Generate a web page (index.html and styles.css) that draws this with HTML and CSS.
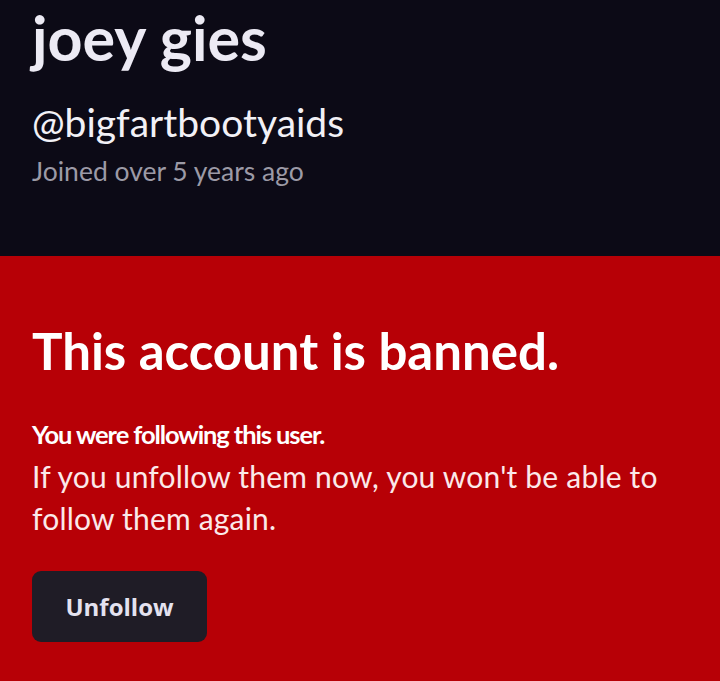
FILE: index.html
```html
<!DOCTYPE html>
<html>
<head>
<meta charset="utf-8">
<link rel="stylesheet" href="styles.css">
</head>
<body>
<header class="profile">
  <h1 class="name">joey gies</h1>
  <div class="handle">@bigfartbootyaids</div>
  <div class="joined">Joined over 5 years ago</div>
</header>
<section class="banned">
  <h2 class="title">This account is banned.</h2>
  <p class="msg"><strong>You were following this user.</strong><br>If you unfollow them now, you won't be able to follow them again.</p>
  <button class="btn">Unfollow</button>
</section>
</body>
</html>
```
FILE: styles.css
```css
html, body { margin: 0; padding: 0; }
body {
  width: 720px;
  height: 681px;
  overflow: hidden;
  background: #b70006;
  font-family: Lato, "Noto Sans", sans-serif;
}
.profile {
  background: #0c0a16;
  height: 256px;
  box-sizing: border-box;
  padding: 2px 32px 0;
}
.name {
  margin: 0;
  font-size: 61px;
  font-weight: 700;
  color: #eceaf4;
  line-height: 72px;
}
.handle {
  margin-top: 25px;
  font-size: 39px;
  color: #f2f1f6;
  line-height: 46px;
}
.joined {
  margin-top: 10px;
  font-size: 26.5px;
  color: #9c9aa6;
  line-height: 32px;
}
.banned {
  padding: 65px 32px 0;
}
.title {
  margin: 0;
  font-size: 51px;
  font-weight: 700;
  color: #ffffff;
  line-height: 60px;
}
.msg {
  margin: 30px 0 0;
  font-size: 30px;
  line-height: 42px;
  letter-spacing: 0.2px;
  color: #fbe9ea;
}
.msg strong {
  font-size: 25.5px;
  font-weight: 700;
  letter-spacing: -1.1px;
  color: #fff;
}
.btn {
  display: block;
  margin-top: 32px;
  width: 175px;
  height: 71px;
  border: 0;
  border-radius: 9px;
  background: #1f1c26;
  color: #e4e2ef;
  font-family: "Open Sans", Lato, sans-serif;
  font-weight: 700;
  font-size: 24px;
}
```
